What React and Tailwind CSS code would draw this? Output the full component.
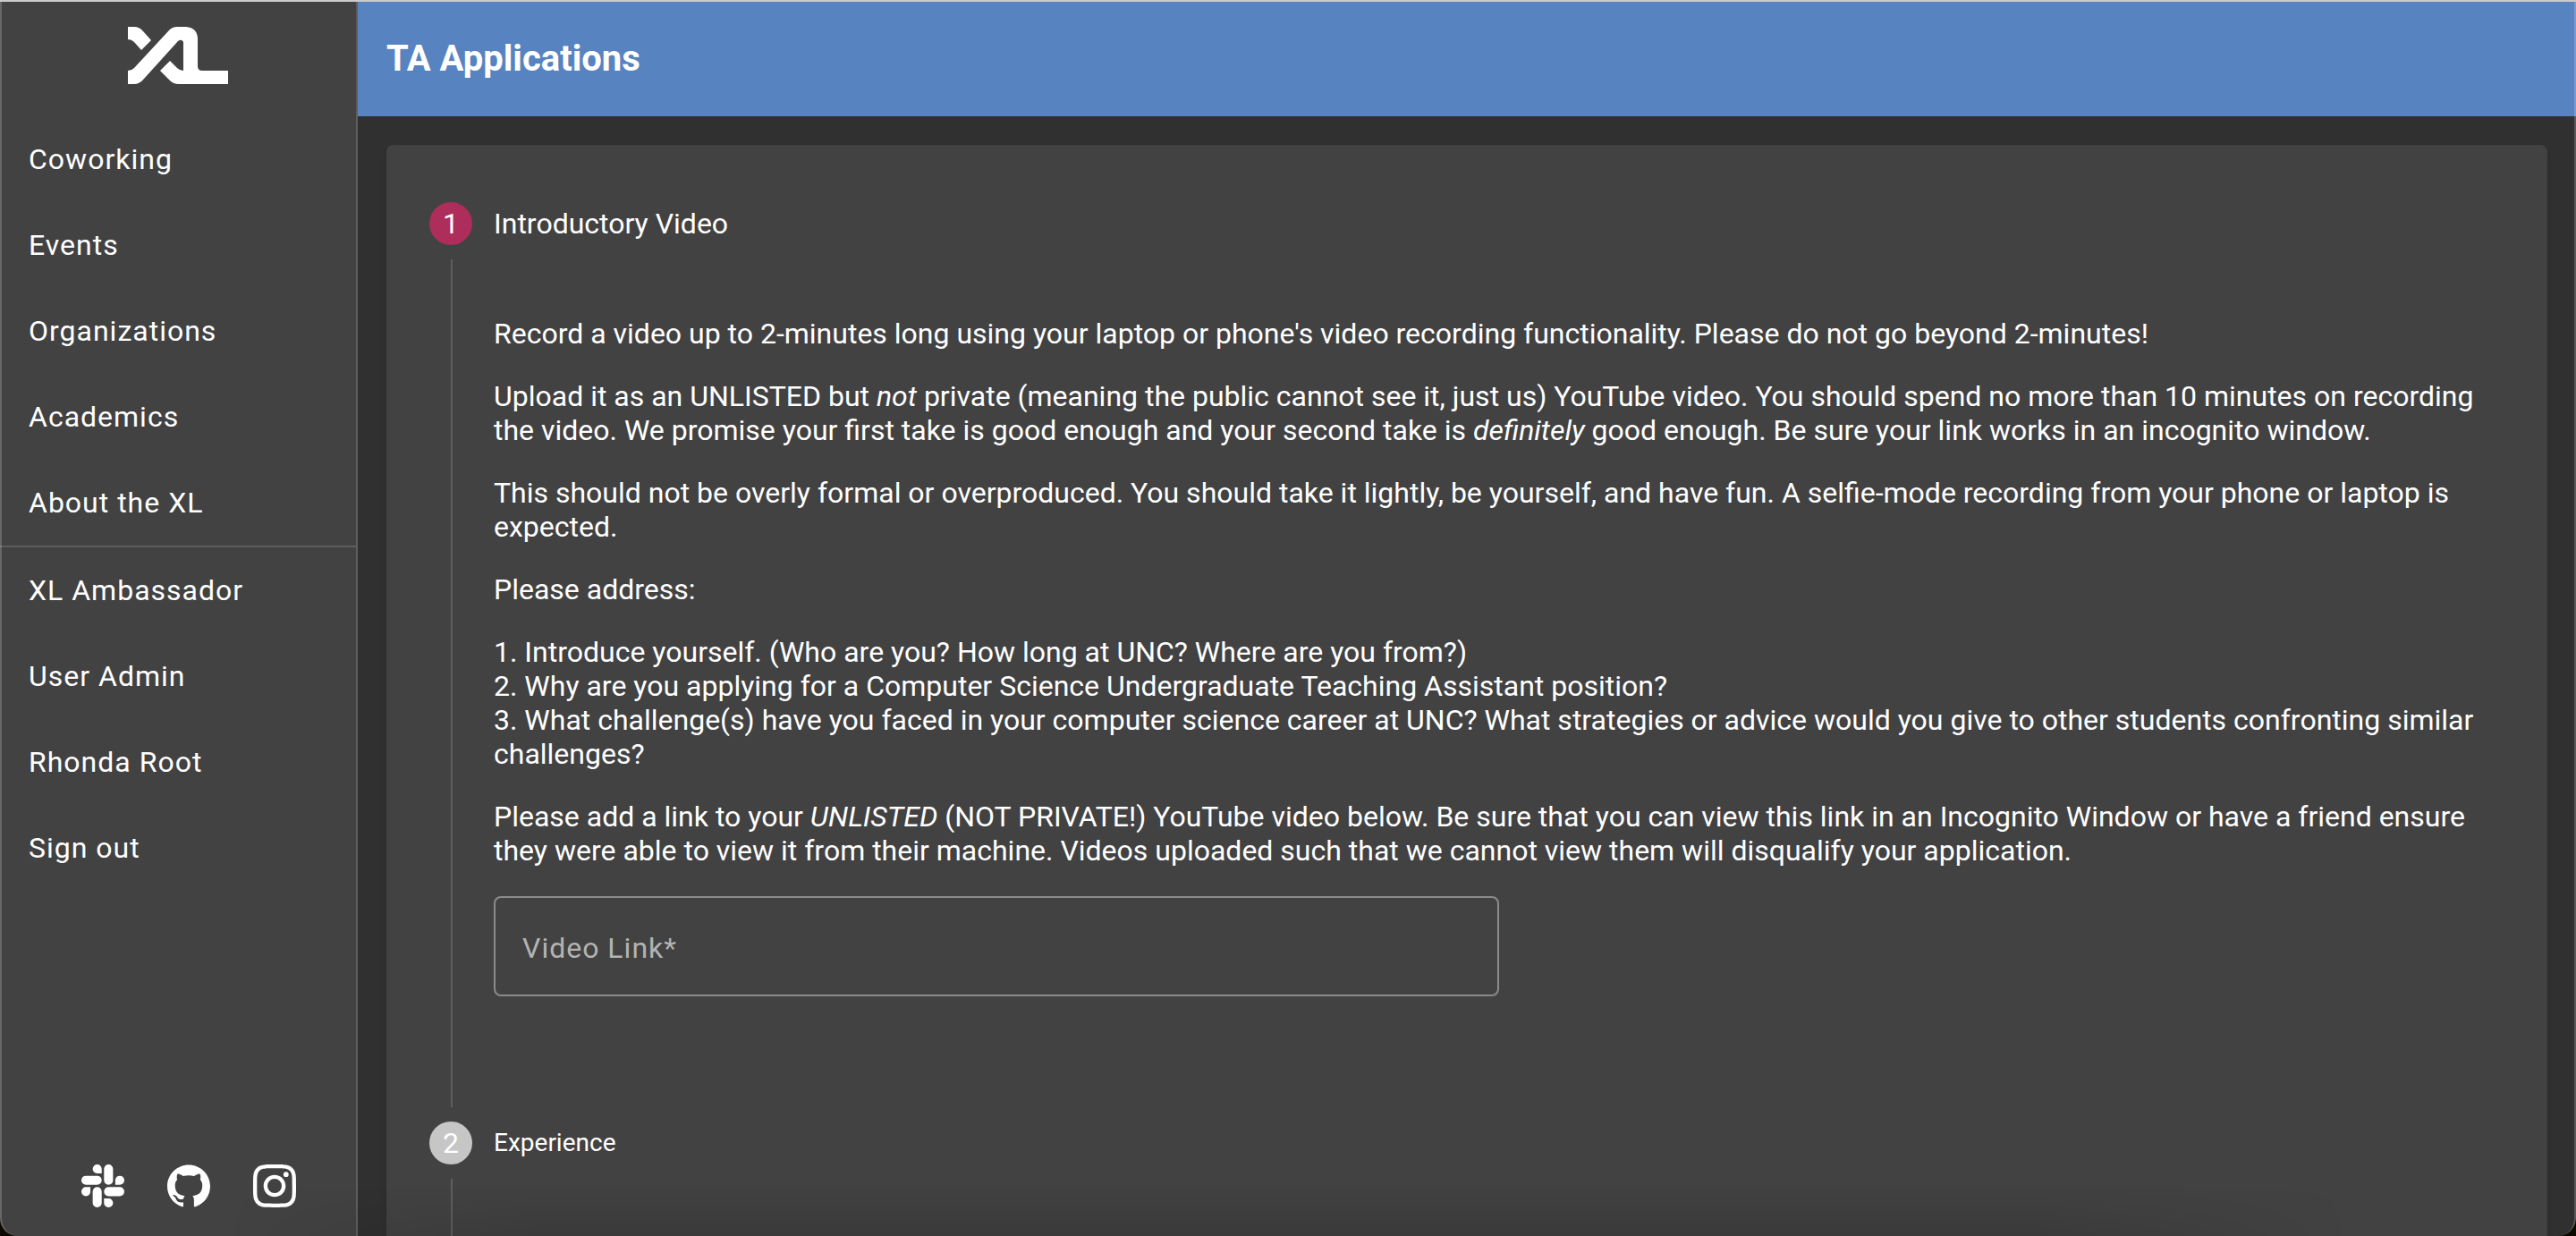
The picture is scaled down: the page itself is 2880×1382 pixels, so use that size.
import { SiSlack, SiGithub, SiInstagram } from "react-icons/si";

const mainLinks = ["Coworking", "Events", "Organizations", "Academics", "About the XL"];
const userLinks = ["XL Ambassador", "User Admin", "Rhonda Root", "Sign out"];
const socials = [
  { name: "Slack", Icon: SiSlack },
  { name: "GitHub", Icon: SiGithub },
  { name: "Instagram", Icon: SiInstagram },
];

function Logo() {
  return (
    <svg viewBox="0 0 112 64" className="h-16 w-28" fill="#fff" aria-label="XL">
      <path d="M0 0H7Q13 0 17 5L26 15L15 26L7 17Q4 14 0 14Z" />
      <path
        fillRule="evenodd"
        d="M0 49Q4 49 7 46L45 5Q49 0 55 0H65Q78 1 78 14V44Q78 49 83 49H112V64H57Q50 64 46 59L36 49L47 38L55 46Q58 49 62 49V17Q60 13 56 16L18 58Q13 64 7 64H0Z"
      />
    </svg>
  );
}

function NavList({ items }) {
  return (
    <ul>
      {items.map((label) => (
        <li key={label}>
          <a href="#" className="flex h-24 items-center pl-8 text-[32px] leading-12 tracking-[1px]">
            {label}
          </a>
        </li>
      ))}
    </ul>
  );
}

function Sidebar() {
  return (
    <aside className="flex w-[400px] shrink-0 flex-col border-r-2 border-[#5e5e5e] bg-[#424242]">
      <a href="#" className="flex h-32 justify-center pt-7">
        <Logo />
      </a>
      <nav className="flex-1">
        <NavList items={mainLinks} />
        <hr className="border-t-2 border-[#5e5e5e]" />
        <NavList items={userLinks} />
      </nav>
      <div className="flex justify-center gap-12 pb-8 pl-6">
        {socials.map(({ name, Icon }) => (
          <a key={name} href="#" aria-label={name}>
            <Icon className="size-12" />
          </a>
        ))}
      </div>
    </aside>
  );
}

function StepHeader({ number, title, active }) {
  return (
    <button type="button" className="flex w-full items-center gap-6 py-12 pl-12 text-left">
      <span
        className={
          active
            ? "flex size-12 items-center justify-center rounded-full bg-[#ad2d5b] text-[32px]"
            : "flex size-12 items-center justify-center rounded-full bg-[#c6c6c6] text-[32px]"
        }
      >
        {number}
      </span>
      <span className={active ? "text-[32px] leading-12" : "text-[28px] leading-12"}>{title}</span>
    </button>
  );
}

export default function App() {
  return (
    <div className="h-screen bg-[#0c0a00]">
      <div className="relative flex h-full overflow-hidden rounded-b-[20px] border-t-2 border-[#cbcbcb] bg-[#303030] font-['Roboto',sans-serif] text-white">
        <Sidebar />
        <main className="flex min-w-0 flex-1 flex-col">
          <header className="flex h-32 shrink-0 items-center bg-[#5783c0] px-8">
            <h1 className="text-[40px] leading-16 font-bold">TA Applications</h1>
          </header>
          <div className="min-h-0 flex-1 overflow-hidden p-8">
            <section className="rounded-lg bg-[#424242] pt-4 shadow-md">
              <StepHeader number={1} title="Introductory Video" active />
              <div className="relative pr-12 pb-[92px] pl-30">
                <div className="absolute -top-8 -bottom-8 left-18 w-0.5 bg-[#5e5e5e]" />
                <div className="flex flex-col gap-8 pt-8 text-[32px] leading-[38px]">
                  <p>
                    Record a video up to 2-minutes long using your laptop or phone's video recording functionality.
                    Please do not go beyond 2-minutes!
                  </p>
                  <p>
                    Upload it as an UNLISTED but <em>not</em> private (meaning the public cannot see it, just us)
                    YouTube video. You should spend no more than 10 minutes on recording the video. We promise your
                    first take is good enough and your second take is <em>definitely</em> good enough. Be sure your
                    link works in an incognito window.
                  </p>
                  <p>
                    This should not be overly formal or overproduced. You should take it lightly, be yourself, and
                    have fun. A selfie-mode recording from your phone or laptop is expected.
                  </p>
                  <p>Please address:</p>
                  <p>
                    1. Introduce yourself. (Who are you? How long at UNC? Where are you from?)
                    <br />
                    2. Why are you applying for a Computer Science Undergraduate Teaching Assistant position?
                    <br />
                    3. What challenge(s) have you faced in your computer science career at UNC? What strategies or
                    advice would you give to other students confronting similar challenges?
                  </p>
                  <p>
                    Please add a link to your <em>UNLISTED</em> (NOT PRIVATE!) YouTube video below. Be sure that you
                    can view this link in an Incognito Window or have a friend ensure they were able to view it from
                    their machine. Videos uploaded such that we cannot view them will disqualify your application.
                  </p>
                  <input
                    type="text"
                    aria-label="Video Link"
                    placeholder="Video Link*"
                    className="h-28 w-1/2 rounded-lg border-2 border-[#8b8b8b] bg-transparent px-[30px] pt-1 text-[32px] tracking-[1px] placeholder:text-[#b3b3b3]"
                  />
                </div>
              </div>
              <StepHeader number={2} title="Experience" />
              <div className="relative h-64">
                <div className="absolute -top-8 -bottom-8 left-18 w-0.5 bg-[#5e5e5e]" />
              </div>
            </section>
          </div>
        </main>
        <div className="pointer-events-none absolute inset-x-64 bottom-0 h-14 bg-linear-to-t from-black/12 to-transparent mask-x-from-85% mask-x-to-100%" />
        <div className="pointer-events-none absolute inset-0 rounded-b-[20px] border-x-2 border-white/20" />
      </div>
    </div>
  );
}
